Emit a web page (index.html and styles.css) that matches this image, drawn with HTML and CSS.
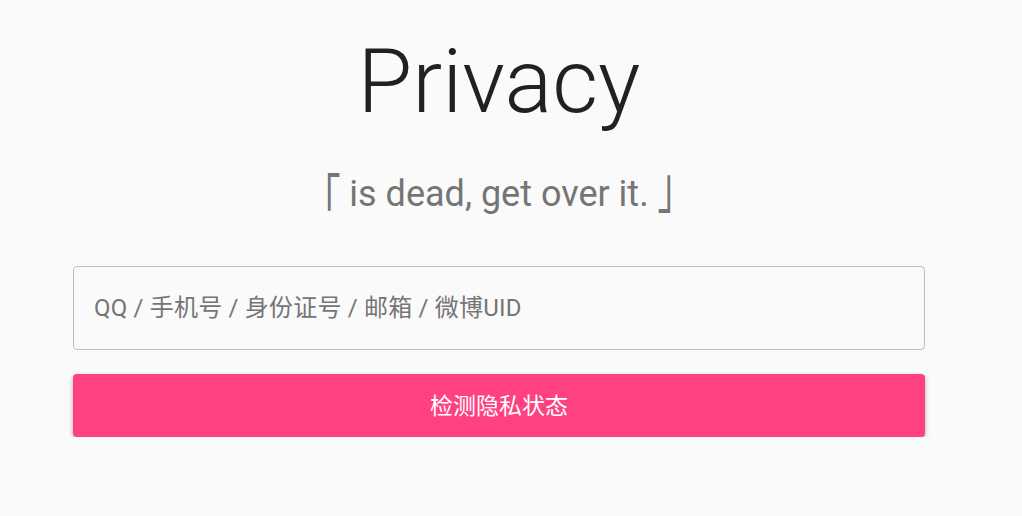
FILE: index.html
```html
<!DOCTYPE html>
<html lang="zh-CN">
<head>
<meta charset="utf-8">
<title>Privacy</title>
<link rel="stylesheet" href="styles.css">
</head>
<body>
<main class="page">
  <h1 class="title">Privacy</h1>
  <p class="subtitle"><span class="bracket bracket-open">「</span> is dead, get over it. <span class="bracket bracket-close">」</span></p>
  <form class="search">
    <div class="field"><input class="input" type="text" placeholder="QQ / 手机号 / 身份证号 / 邮箱 / 微博UID"></div>
    <button class="btn" type="button">检测隐私状态</button>
  </form>
</main>
</body>
</html>
```

FILE: styles.css
```css
html, body {
  margin: 0;
  padding: 0;
  background: #fafafa;
}
body {
  font-family: Roboto, "Noto Sans CJK SC", sans-serif;
  color: #212121;
}
.page {
  width: 852px;
  margin-left: 73px;
  display: flex;
  flex-direction: column;
}
.title {
  margin: 29px 0 0;
  font-size: 89px;
  font-weight: 300;
  line-height: 106px;
  text-align: center;
  color: #212121;
}
.subtitle {
  margin: 38px 0 0;
  font-size: 36px;
  font-weight: 400;
  line-height: 42px;
  text-align: center;
  color: #757575;
}
.bracket {
  display: inline-block;
  transform: scaleY(1.574);
}
.bracket-open {
  transform-origin: 50% 4.5px;
}
.bracket-close {
  transform-origin: 50% 30.5px;
}
.search {
  margin-top: 51px;
  display: flex;
  flex-direction: column;
  gap: 24px;
}
.field {
  display: flex;
}
.input {
  flex: 1;
  box-sizing: border-box;
  height: 84px;
  border: 1px solid #bdbdbd;
  border-radius: 4px;
  background: #fafafa;
  padding: 0 20px;
  font-family: Roboto, "Noto Sans CJK SC", sans-serif;
  font-size: 24px;
  letter-spacing: 0.2px;
  color: #212121;
  outline: none;
}
.input::placeholder {
  color: #757575;
  opacity: 1;
}
.btn {
  height: 63px;
  padding: 0 0 3px;
  border: none;
  border-radius: 4px;
  background: #ff4081;
  color: #fff;
  font-family: Roboto, "Noto Sans CJK SC", sans-serif;
  font-size: 23px;
  box-shadow: 0 2px 5px rgba(0,0,0,0.3);
  cursor: pointer;
}
```
